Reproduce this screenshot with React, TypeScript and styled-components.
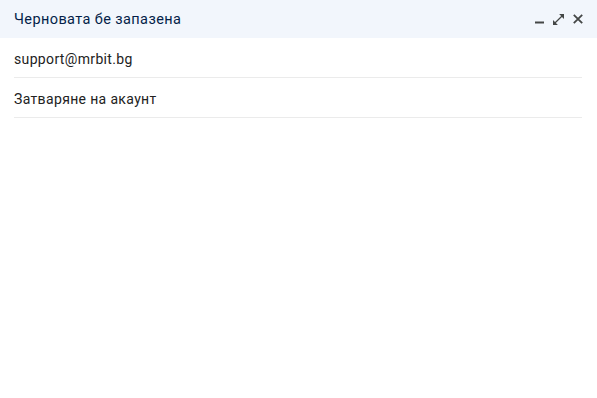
import React from 'react';
import styled, { createGlobalStyle } from 'styled-components';

const Global = createGlobalStyle`
  html, body {
    margin: 0;
    padding: 0;
    background: #ffffff;
  }
  body {
    font-family: Roboto, 'Noto Sans', Arial, sans-serif;
  }
`;

const Window = styled.div`
  width: 597px;
  height: 398px;
  background: #ffffff;
  display: flex;
  flex-direction: column;
`;

const TitleBar = styled.div`
  height: 38px;
  background: #f2f6fc;
  display: flex;
  align-items: center;
  justify-content: space-between;
  padding: 0 14px 0 14px;
  box-sizing: border-box;
`;

const Title = styled.span`
  font-size: 14.5px;
  font-weight: 400;
  color: #041e49;
  letter-spacing: 0.4px;
`;

const Actions = styled.div`
  display: flex;
  align-items: center;
  gap: 9px;
`;

const IconButton = styled.button<{ $w: number }>`
  width: ${(p) => p.$w}px;
  height: 12px;
  padding: 0;
  border: none;
  background: none;
  display: flex;
  align-items: center;
  justify-content: center;
  color: #444746;
  cursor: pointer;
  svg {
    flex-shrink: 0;
    display: block;
  }
`;

const Fields = styled.div`
  display: flex;
  flex-direction: column;
  padding: 0 15px 0 14px;
`;

const Field = styled.div`
  height: 40px;
  display: flex;
  align-items: center;
  border-bottom: 1px solid #ebebeb;
  font-size: 14px;
  letter-spacing: 0.35px;
  color: #222222;
  box-sizing: border-box;
  padding-top: 2px;
`;

const App: React.FC = () => (
  <Window>
    <Global />
    <TitleBar>
      <Title>Черновата бе запазена</Title>
      <Actions>
        <IconButton $w={9} aria-label="Минимизиране">
          <svg width="9" height="12" viewBox="0 0 9 12" fill="currentColor">
            <rect x="0" y="8.5" width="9" height="2" />
          </svg>
        </IconButton>
        <IconButton $w={11} aria-label="Цял екран">
          <svg width="11" height="11" viewBox="3 3 18 18" fill="currentColor">
            <path d="M21 11V3h-8l3.29 3.29-10 10L3 13v8h8l-3.29-3.29 10-10z" />
          </svg>
        </IconButton>
        <IconButton $w={10} aria-label="Затваряне">
          <svg width="10" height="10" viewBox="0 0 10 10" fill="none" stroke="currentColor" strokeWidth="1.8">
            <path d="M0.8 0.8L9.2 9.2M9.2 0.8L0.8 9.2" />
          </svg>
        </IconButton>
      </Actions>
    </TitleBar>
    <Fields>
      <Field>support@mrbit.bg</Field>
      <Field>Затваряне на акаунт</Field>
    </Fields>
  </Window>
);

export default App;
